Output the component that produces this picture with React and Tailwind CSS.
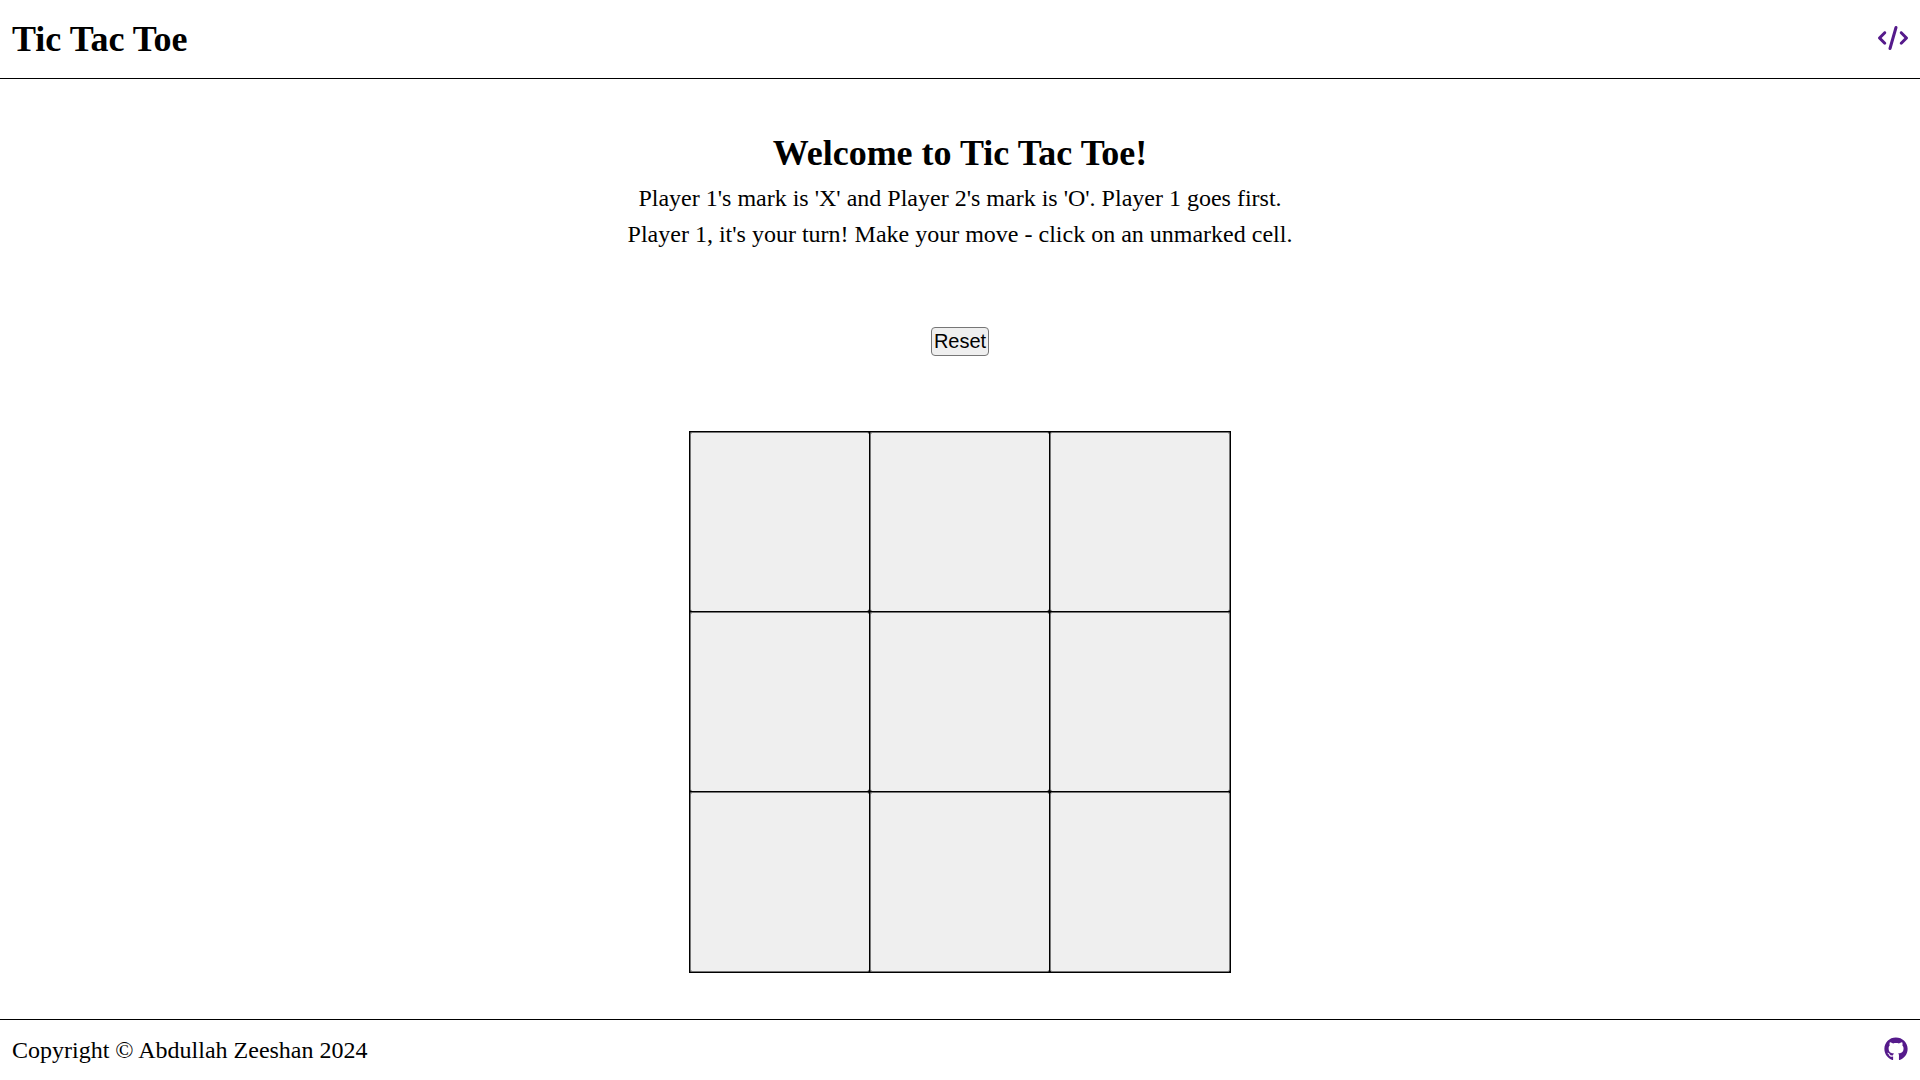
import { useState } from "react";
import { FaCode, FaGithub } from "react-icons/fa6";

const emptyBoard = Array(9).fill("");

export default function App() {
  const [board, setBoard] = useState(emptyBoard);
  const moves = board.filter(Boolean).length;
  const player = (moves % 2) + 1;

  const mark = (index) => {
    if (board[index]) return;
    setBoard(board.map((cell, i) => (i === index ? (player === 1 ? "X" : "O") : cell)));
  };

  return (
    <div className="flex min-h-screen flex-col bg-white font-['Liberation_Serif',serif] text-2xl text-black">
      <header className="flex items-center justify-between border-b border-black p-3">
        <h1 className="text-4xl leading-[54px] font-bold">Tic Tac Toe</h1>
        <a href="#code" aria-label="Source code" className="pb-0.5 text-[#551a8b]">
          <FaCode className="block h-6 w-[30px]" />
        </a>
      </header>
      <main className="flex grow flex-col items-center justify-center">
        <section className="text-center leading-9">
          <h2 className="text-4xl leading-[54px] font-bold">Welcome to Tic Tac Toe!</h2>
          <p>Player 1's mark is 'X' and Player 2's mark is 'O'. Player 1 goes first.</p>
          <p>Player {player}, it's your turn! Make your move - click on an unmarked cell.</p>
        </section>
        <button
          type="button"
          onClick={() => setBoard(emptyBoard)}
          className="my-[75px] rounded-[4px] border border-[#767676] bg-[#efefef] px-0.5 py-px font-['Liberation_Sans',sans-serif] text-xl leading-[25px]"
        >
          Reset
        </button>
        <div className="grid grid-cols-[180px_180px_181px] grid-rows-[180px_180px_181px] border-r border-b border-black">
          {board.map((cell, index) => (
            <div key={index} className="group border-t border-l border-black bg-black">
              <button
                type="button"
                aria-label={`Cell ${index + 1}`}
                onClick={() => mark(index)}
                className="block size-full rounded-[2px] border-t border-l border-[#767676] bg-[#efefef] text-8xl group-nth-[3n]:border-r group-nth-[n+7]:border-b"
              >
                {cell}
              </button>
            </div>
          ))}
        </div>
      </main>
      <footer className="flex items-center justify-between border-t border-black p-3 leading-9">
        <p>Copyright © Abdullah Zeeshan 2024</p>
        <a href="#github" aria-label="GitHub" className="pb-0.5 text-[#551a8b]">
          <FaGithub className="block size-6" />
        </a>
      </footer>
    </div>
  );
}
